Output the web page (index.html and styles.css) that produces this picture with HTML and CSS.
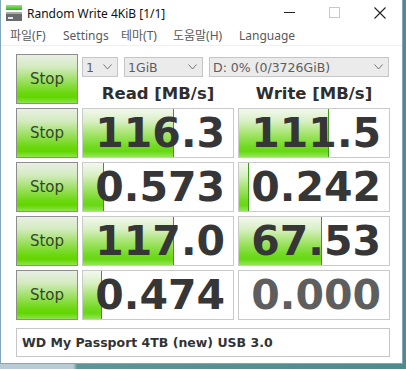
FILE: index.html
```html
<!DOCTYPE html>
<html lang="ko">
<head>
  <meta charset="UTF-8" />
  <title>Random Write 4KiB [1/1]</title>
  <link rel="stylesheet" href="styles.css">
</head>
<body>
  <div class="window">
    <div class="titlebar">
      <svg class="app-icon" width="16" height="16" viewBox="0 0 16 16">
        <defs>
          <linearGradient id="g1" x1="0" y1="0" x2="0" y2="1">
            <stop offset="0" stop-color="#9be86a"/>
            <stop offset="1" stop-color="#2fb02a"/>
          </linearGradient>
        </defs>
        <rect x="0" y="0" width="16" height="5" fill="url(#g1)"/>
        <rect x="0" y="7" width="16" height="9" fill="#6b6b6b"/>
        <rect x="0" y="7" width="16" height="2" fill="#a9a9a9"/>
        <rect x="2" y="12" width="5" height="2" fill="#e8e8e8"/>
      </svg>
      <span class="title">Random Write 4KiB [1/1]</span>
      <div class="controls">
        <div class="ctl">
          <svg width="11" height="11" viewBox="0 0 11 11"><line x1="0" y1="5.5" x2="11" y2="5.5" stroke="#222" stroke-width="1"/></svg>
        </div>
        <div class="ctl">
          <svg width="11" height="11" viewBox="0 0 11 11"><rect x="0.5" y="0.5" width="10" height="10" fill="none" stroke="#c8c8c8" stroke-width="1"/></svg>
        </div>
        <div class="ctl">
          <svg width="12" height="12" viewBox="0 0 12 12"><path d="M0.5 0.5 L11.5 11.5 M11.5 0.5 L0.5 11.5" stroke="#222" stroke-width="1.1" fill="none"/></svg>
        </div>
      </div>
    </div>

    <div class="menubar">
      <span class="menu m-file">파일(F)</span>
      <span class="menu m-settings">Settings</span>
      <span class="menu m-theme">테마(T)</span>
      <span class="menu m-help">도움말(H)</span>
      <span class="menu m-lang">Language</span>
    </div>

    <div class="main">
      <div class="board">
        <button class="stop">Stop</button>
        <div class="top-panel">
          <div class="combos">
            <div class="combo c-count"><span>1</span>
              <svg width="9" height="6" viewBox="0 0 9 6"><path d="M0.5 0.5 L4.5 5 L8.5 0.5" stroke="#777" fill="none"/></svg></div>
            <div class="combo c-size"><span>1GiB</span>
              <svg width="9" height="6" viewBox="0 0 9 6"><path d="M0.5 0.5 L4.5 5 L8.5 0.5" stroke="#777" fill="none"/></svg></div>
            <div class="combo c-drive"><span>D: 0% (0/3726GiB)</span>
              <svg width="9" height="6" viewBox="0 0 9 6"><path d="M0.5 0.5 L4.5 5 L8.5 0.5" stroke="#777" fill="none"/></svg></div>
          </div>
          <div class="headers">
            <div class="head">Read [MB/s]</div>
            <div class="head">Write [MB/s]</div>
          </div>
        </div>

        <button class="stop">Stop</button>
        <div class="cell"><div class="bar" style="width:91px"></div><span class="num">116.3</span></div>
        <div class="cell"><div class="bar" style="width:90px"></div><span class="num">111.5</span></div>

        <button class="stop">Stop</button>
        <div class="cell"><div class="bar" style="width:21px"></div><span class="num">0.573</span></div>
        <div class="cell"><div class="bar" style="width:10px"></div><span class="num">0.242</span></div>

        <button class="stop">Stop</button>
        <div class="cell"><div class="bar" style="width:91px"></div><span class="num">117.0</span></div>
        <div class="cell"><div class="bar" style="width:83px"></div><span class="num">67.53</span></div>

        <button class="stop">Stop</button>
        <div class="cell"><div class="bar" style="width:19px"></div><span class="num">0.474</span></div>
        <div class="cell"><span class="num num-idle">0.000</span></div>
      </div>
      <div class="info">WD My Passport 4TB (new) USB 3.0</div>
    </div>
  </div>
</body>
</html>
```

FILE: styles.css
```css
*, *::before, *::after { box-sizing: border-box; }

body {
  margin: 0;
  width: 406px;
  height: 369px;
  overflow: hidden;
  background: linear-gradient(to right, #b9ccd6 0%, #b9ccd6 18%, #5f9596 19%, #4f8a8c 100%);
  font-family: "Noto Sans", "Noto Sans CJK KR", sans-serif;
}

.window {
  width: 403px;
  height: 364px;
  background: #fff;
  border: 1px solid #7fa7bd;
  border-top: none;
  display: flex;
  flex-direction: column;
}

/* title bar */
.titlebar {
  height: 25px;
  display: flex;
  align-items: center;
}

.app-icon {
  margin-left: 5px;
  margin-top: 1px;
}

.title {
  margin-left: 5px;
  font-size: 12px;
  color: #111;
  margin-top: 1px;
}

.controls {
  margin-left: auto;
  display: flex;
  height: 25px;
}

.ctl {
  width: 45px;
  display: flex;
  align-items: center;
  justify-content: center;
}

/* menu */
.menubar {
  height: 21px;
  display: flex;
  align-items: center;
  border-bottom: 1px solid #f0f0f0;
  padding-left: 9px;
  font-size: 12px;
  color: #5a5a5a;
}

.menu { white-space: nowrap; }
.m-file { width: 53px; }
.m-settings { width: 58px; }
.m-theme { width: 52px; }
.m-help { width: 66px; }

/* main board */
.main {
  padding: 8px 0 0 15px;
}

.board {
  display: grid;
  grid-template-columns: 62px 152px 152px;
  grid-auto-rows: 50px;
  gap: 4px;
}

.stop {
  margin: 0;
  padding: 0;
  border: 1px solid #8d8d8d;
  background: linear-gradient(to bottom, #e9efe4 0%, #d3ebc0 25%, #9fe066 52%, #6cd812 78%, #62d600 88%, #8fe44e 100%);
  font-family: "DejaVu Sans", sans-serif;
  font-size: 15px;
  color: #35452c;
}

.top-panel {
  grid-column: 2 / 4;
  display: flex;
  flex-direction: column;
}

.combos {
  display: flex;
  gap: 6px;
  margin-top: 3px;
  height: 20px;
}

.combo {
  height: 20px;
  border: 1px solid #c6c6c6;
  background: #ebebeb;
  display: flex;
  align-items: center;
  justify-content: space-between;
  padding: 0 5px 0 3px;
  font-family: "DejaVu Sans", sans-serif;
  font-size: 12.5px;
  color: #5c5c5c;
}

.c-count { width: 36px; }
.c-size { width: 79px; }
.c-drive { width: 180px; }

.headers {
  display: grid;
  grid-template-columns: 152px 152px;
  gap: 4px;
  margin-top: 5px;
}

.head {
  text-align: center;
  font-family: "DejaVu Sans", sans-serif;
  font-weight: bold;
  font-size: 16.5px;
  line-height: 24px;
  color: #2e2e2e;
}

.cell {
  position: relative;
  border: 1px solid #cacaca;
  background: #fff;
  overflow: hidden;
  text-align: right;
}

.bar {
  position: absolute;
  left: 0;
  top: 0;
  bottom: 0;
  border-right: 1px solid #3f9a1a;
  background: linear-gradient(to bottom, #f3f8ee 0%, #d9f0c6 25%, #a4e46c 52%, #72da22 78%, #68d812 88%, #94e65a 100%);
}

.num {
  position: relative;
  display: block;
  padding-right: 8px;
  font-family: "DejaVu Sans", sans-serif;
  font-weight: bold;
  font-size: 41px;
  line-height: 48px;
  color: #363636;
}

.num-idle { color: #5e5e5e; }

.info {
  margin-top: 8px;
  width: 374px;
  height: 29px;
  border: 1px solid #c6c6c6;
  padding-left: 5px;
  display: flex;
  align-items: center;
  font-family: "DejaVu Sans", sans-serif;
  font-weight: bold;
  font-size: 12.5px;
  color: #333;
}
```
